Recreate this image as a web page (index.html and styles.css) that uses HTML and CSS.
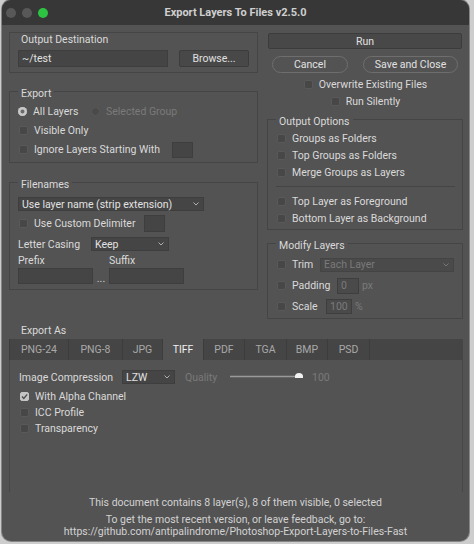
FILE: index.html
```html
<!DOCTYPE html>
<html>
<head>
<meta charset="utf-8">
<link rel="stylesheet" href="styles.css">
</head>
<body>
<div class="window">
  <div class="titlebar">
    <div class="lights"><span class="light"></span><span class="light"></span><span class="light green"></span></div>
    <div class="title">Export Layers To Files v2.5.0</div>
    <div></div>
  </div>
  <div class="content">
    <div class="columns">
      <div class="col">
        <div class="panel out">
          <div class="panel-title">Output Destination</div>
          <div class="dest-row">
            <div class="input dest">~/test</div>
            <div class="btn browse">Browse...</div>
          </div>
        </div>

        <fieldset class="group export">
          <legend>Export</legend>
          <div class="row r19"><span class="radio on"></span><span class="lab-all">All Layers</span><span class="radio off"></span><span class="dis">Selected Group</span></div>
          <div class="row r19"><span class="cb"></span><span>Visible Only</span></div>
          <div class="row r19"><span class="cb"></span><span class="lab-ignore">Ignore Layers Starting With</span><span class="input tiny"></span></div>
        </fieldset>

        <fieldset class="group filenames">
          <legend>Filenames</legend>
          <div class="select namesel"><span>Use layer name (strip extension)</span><svg class="chev" width="6" height="4" viewBox="0 0 6 4"><path d="M0.5 0.5 L3 3 L5.5 0.5" fill="none" stroke="#b0b0b0" stroke-width="1"/></svg></div>
          <div class="row delim"><span class="cb"></span><span class="lab-delim">Use Custom Delimiter</span><span class="input tiny delimbox"></span></div>
          <div class="row casing"><span class="casing-label">Letter Casing</span><div class="select keepsel"><span>Keep</span><svg class="chev" width="6" height="4" viewBox="0 0 6 4"><path d="M0.5 0.5 L3 3 L5.5 0.5" fill="none" stroke="#b0b0b0" stroke-width="1"/></svg></div></div>
          <div class="fix-grid labels"><span>Prefix</span><span></span><span>Suffix</span></div>
          <div class="fix-grid fields"><span class="input fix"></span><span class="dots">...</span><span class="input fix"></span></div>
        </fieldset>
      </div>

      <div class="col">
        <div class="btn run">Run</div>
        <div class="btn-row">
          <div class="pill cancel">Cancel</div>
          <div class="pill save">Save and Close</div>
        </div>
        <div class="center-opts">
          <div class="row r17"><span class="cb"></span><span>Overwrite Existing Files</span></div>
          <div class="row r17"><span class="cb"></span><span>Run Silently</span></div>
        </div>

        <fieldset class="group right outopts">
          <legend>Output Options</legend>
          <div class="row r17"><span class="cb"></span><span>Groups as Folders</span></div>
          <div class="row r17"><span class="cb"></span><span>Top Groups as Folders</span></div>
          <div class="row r17"><span class="cb"></span><span>Merge Groups as Layers</span></div>
          <div class="sep"></div>
          <div class="row r17"><span class="cb"></span><span>Top Layer as Foreground</span></div>
          <div class="row r17"><span class="cb"></span><span>Bottom Layer as Background</span></div>
        </fieldset>

        <fieldset class="group right modify">
          <legend>Modify Layers</legend>
          <div class="row r21"><span class="cb"></span><span class="lab-trim">Trim</span><div class="select dis-sel trimsel"><span class="dis">Each Layer</span><svg class="chev" width="6" height="4" viewBox="0 0 6 4"><path d="M0.5 0.5 L3 3 L5.5 0.5" fill="none" stroke="#777" stroke-width="1"/></svg></div></div>
          <div class="row r21"><span class="cb"></span><span class="lab-pad">Padding</span><span class="input padbox dis">0</span><span class="dis unit">px</span></div>
          <div class="row r21"><span class="cb"></span><span class="lab-scale">Scale</span><span class="input scalebox dis">100</span><span class="dis unit">%</span></div>
        </fieldset>
      </div>
    </div>

    <div class="export-as">Export As</div>
    <div class="tabs">
      <div class="tab w60">PNG-24</div>
      <div class="tab w54">PNG-8</div>
      <div class="tab w40">JPG</div>
      <div class="tab w41 sel">TIFF</div>
      <div class="tab w41">PDF</div>
      <div class="tab w42">TGA</div>
      <div class="tab w41">BMP</div>
      <div class="tab w42">PSD</div>
    </div>
    <div class="tab-panel">
      <div class="row comp">
        <span class="comp-label">Image Compression</span>
        <div class="select lzw"><span>LZW</span><svg class="chev" width="6" height="4" viewBox="0 0 6 4"><path d="M0.5 0.5 L3 3 L5.5 0.5" fill="none" stroke="#b0b0b0" stroke-width="1"/></svg></div>
        <span class="dis quality">Quality</span>
        <svg class="slider" width="74" height="10" viewBox="0 0 74 10"><line x1="0" y1="7.5" x2="68" y2="7.5" stroke="#9a9a9a" stroke-width="1.5"/><path d="M65 9 L65 7.5 Q65 4 69 4 Q73 4 73 7.5 L73 9 Z" fill="#f2f2f2"/></svg>
        <span class="dis hundred">100</span>
      </div>
      <div class="checks">
        <div class="row r16"><span class="cb checked"><svg width="9" height="9" viewBox="0 0 9 9"><path d="M2 4.6 L3.8 6.4 L7.2 2.4" fill="none" stroke="#4c4c4c" stroke-width="1.4"/></svg></span><span>With Alpha Channel</span></div>
        <div class="row r16"><span class="cb"></span><span>ICC Profile</span></div>
        <div class="row r16"><span class="cb"></span><span>Transparency</span></div>
      </div>
    </div>

    <div class="footer">
      <div class="f1">This document contains 8 layer(s), 8 of them visible, 0 selected</div>
      <div class="f2">To get the most recent version, or leave feedback, go to:<br>https://github.com/antipalindrome/Photoshop-Export-Layers-to-Files-Fast</div>
    </div>
  </div>
</div>
</body>
</html>
```

FILE: styles.css
```css
* { box-sizing: border-box; }
html, body { margin: 0; padding: 0; }
body {
  background: #cdcdcd;
  font-family: Roboto, "Liberation Sans", Arial, sans-serif;
  font-size: 10.5px;
  color: #dadada;
  width: 474px;
  height: 544px;
  overflow: hidden;
}
.window {
  margin-left: 2px;
  width: 467px;
  height: 541px;
  background: #535353;
  border-radius: 9px;
  overflow: hidden;
  box-shadow: 0 0 0 1px rgba(0,0,0,0.35);
}
.titlebar {
  height: 25px;
  background: #373737;
  display: grid;
  grid-template-columns: 1fr auto 1fr;
  align-items: center;
}
.lights { display: flex; gap: 6px; padding-left: 4px; }
.light { width: 10px; height: 10px; border-radius: 50%; background: #585858; }
.light.green { background: #2cc441; }
.title { font-weight: bold; font-size: 11px; color: #cfcfcf; }

.content { padding: 0 7px; }
.columns {
  display: grid;
  grid-template-columns: 249px 194px;
  column-gap: 10px;
  align-items: start;
}
.col { display: flex; flex-direction: column; }

.panel { border: 1px solid #454545; }
.panel.out { margin-top: 7px; padding: 0 8px 5px 8px; }
.panel-title { line-height: 13px; padding-left: 3px; }
.dest-row { display: flex; gap: 11px; margin-top: 4px; height: 17px; }
.input {
  background: #454545;
  border: 1px solid #3e3e3e;
  display: flex;
  align-items: center;
  padding-left: 3px;
}
.dest { flex: 1; color: #e2e2e2; }
.btn {
  background: #484848;
  border: 1px solid #3c3c3c;
  border-radius: 2px;
  display: flex;
  align-items: center;
  justify-content: center;
  color: #e0e0e0;
}
.browse { width: 70px; }

fieldset.group {
  border: 1px solid #454545;
  margin: 0;
  min-width: 0;
}
fieldset.group legend {
  padding: 4px 3px 0 3px;
  line-height: 13px;
}
fieldset.export { margin-top: 10px; padding: 2px 8px 3px 8px; }
fieldset.filenames { margin-top: 11px; padding: 6px 8px 5px 8px; }

.row { display: flex; align-items: center; white-space: nowrap; }
.r19 { height: 19px; }
.r17 { height: 17px; }
.r21 { height: 21px; }
.r16 { height: 16px; }

.cb {
  width: 9px; height: 9px;
  background: #474747;
  border: 1px solid #595959;
  border-radius: 2px;
  margin: 0 6px 0 1px;
  flex: none;
  display: flex;
}
.cb.checked { background: #c4c4c4; border-color: #c4c4c4; }
.cb.checked svg { margin: -1px; }
.radio {
  width: 9px; height: 9px; border-radius: 50%;
  flex: none;
  margin-right: 6px;
}
.radio.on { background: #c8c8c8; box-shadow: inset 0 0 0 2.5px #c8c8c8, inset 0 0 0 4.5px #6a6a6a; }
.radio.off { background: #4a4a4a; border: 1px solid #595959; }
.lab-all { width: 58px; }
.dis { color: #7a7a7a; }

.tiny { width: 21px; height: 16px; }
.lab-ignore { width: 138px; }
.select {
  background: #454545;
  border: 1px solid #3e3e3e;
  display: flex;
  align-items: center;
  justify-content: space-between;
  padding: 0 4px 0 3px;
  height: 14px;
  color: #e2e2e2;
}
.namesel { width: 186px; }
.delim { height: 17px; margin-top: 4px; }
.lab-delim { width: 110px; }
.delimbox { height: 17px; }
.casing { height: 14px; margin-top: 5px; }
.casing-label { width: 73px; }
.keepsel { width: 78px; }
.fix-grid { display: grid; grid-template-columns: 75px 16px 75px; }
.labels { margin-top: 3px; line-height: 13px; }
.fields { margin-top: 1px; height: 16px; }
.fix { height: 16px; }
.dots { text-align: center; line-height: 10px; align-self: end; color: #cfcfcf; }

.run { margin-top: 8px; height: 16px; }
.btn-row { display: flex; gap: 15px; margin-top: 7px; padding: 0 4px; height: 17px; }
.pill {
  border: 1px solid #6e6e6e;
  border-radius: 9px;
  display: flex; align-items: center; justify-content: center;
  color: #e2e2e2;
}
.cancel { width: 76px; }
.save { width: 95px; }
.center-opts { margin-top: 3px; display: flex; flex-direction: column; align-items: center; }

fieldset.right { margin-left: -1px; margin-right: -1px; }
fieldset.outopts { margin-top: 1px; padding: 2px 7px 2px 8px; }
.sep { height: 1px; background: #444444; margin: 5px 0 6px 0; }
fieldset.modify { margin-top: 5px; padding: 2px 7px 1px 8px; }
.lab-trim { width: 28px; }
.lab-pad { width: 45px; }
.lab-scale { width: 34px; }
.trimsel { flex: 1; margin-right: 1px; background: #4a4a4a; border-color: #444; }
.padbox { width: 22px; height: 16px; background: #4a4a4a; }
.scalebox { width: 26px; height: 15px; background: #4a4a4a; }
.unit { margin-left: 3px; }

.export-as { margin-top: 5px; line-height: 13px; padding-left: 12px; }
.tabs {
  margin-top: 2px;
  margin-right: -1px;
  height: 21px;
  background: #454545;
  display: flex;
  border-left: 1px solid #3c3c3c;
}
.tab {
  border-right: 1px solid #3c3c3c;
  display: flex; align-items: center; justify-content: center;
  color: #a9a9a9;
}
.tab.sel { background: #535353; color: #f0f0f0; }
.w60 { width: 59px; }
.w54 { width: 54px; }
.w40 { width: 40px; }
.w41 { width: 41px; }
.w42 { width: 42px; }
.tab-panel {
  margin-right: -1px;
  height: 132px;
  border-left: 1px solid #474747;
  border-right: 1px solid #474747;
  padding: 9px 9px 0 9px;
}
.comp { height: 16px; }
.comp-label { width: 103px; }
.lzw { width: 53px; }
.quality { margin-left: 10px; width: 45px; }
.slider { flex: none; margin-top: -6px; }
.hundred { margin-left: 8px; }
.checks { margin-top: 3px; }

.footer { text-align: center; color: #d2d2d2; margin-top: 5px; }
.f1 { line-height: 12px; }
.f2 { line-height: 12px; margin-top: 5px; }
```
